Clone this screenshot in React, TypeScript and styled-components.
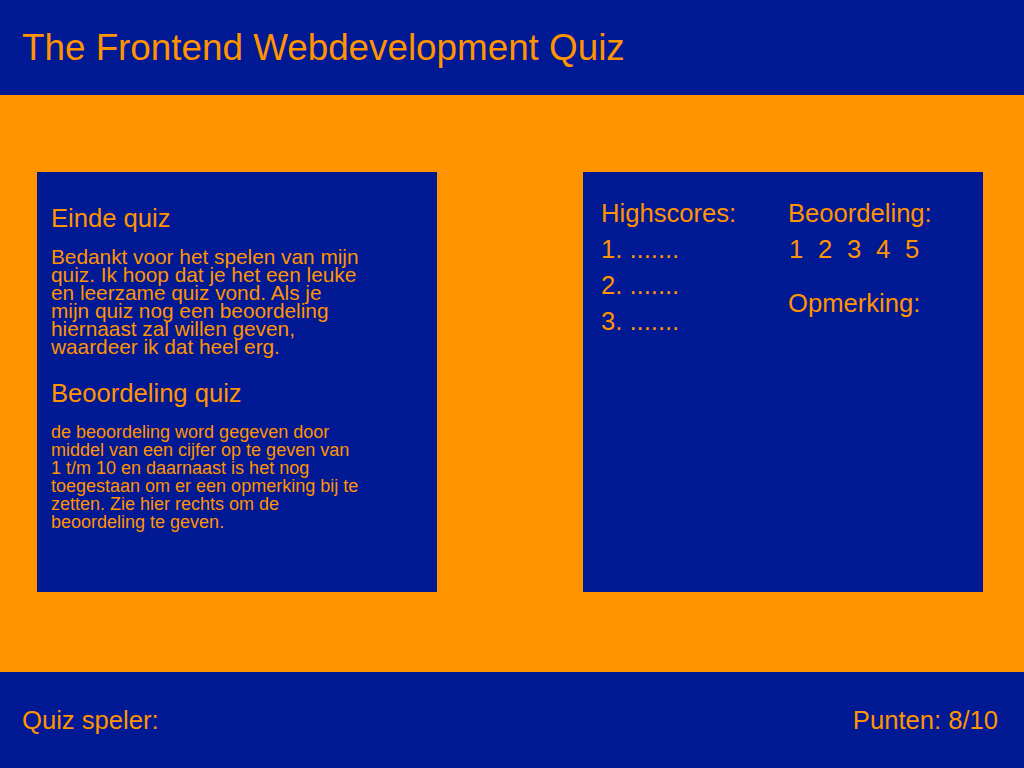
import React from 'react';
import styled, { createGlobalStyle } from 'styled-components';

const BLUE = '#011993';
const ORANGE = '#ff9300';

const GlobalStyle = createGlobalStyle`
  html, body {
    margin: 0;
    padding: 0;
  }
  body {
    font-family: 'Liberation Sans', Arial, sans-serif;
    background: ${ORANGE};
    color: ${ORANGE};
  }
`;

const Page = styled.div`
  display: flex;
  flex-direction: column;
  height: 768px;
`;

const Header = styled.header`
  height: 95px;
  background: ${BLUE};
  display: flex;
  align-items: center;
  padding: 0 22px;
`;

const Title = styled.h1`
  margin: 0;
  font-size: 36.8px;
  font-weight: normal;
  line-height: 42px;
`;

const Main = styled.main`
  height: 577px;
  box-sizing: border-box;
  display: flex;
  align-items: flex-start;
  justify-content: space-between;
  padding: 77px 41px 0 37px;
`;

const Card = styled.section<{ $top: number; $left: number }>`
  width: 400px;
  height: 420px;
  box-sizing: border-box;
  background: ${BLUE};
  padding: ${p => p.$top}px 14px 0 ${p => p.$left}px;
`;

const Heading = styled.h2`
  margin: 0 0 15px;
  font-size: 25.6px;
  font-weight: normal;
  line-height: 30px;
`;

const Text = styled.p<{ $size: number }>`
  margin: 0 0 22px;
  width: 310px;
  font-size: ${p => p.$size}px;
  line-height: 18px;
`;

const Columns = styled.div`
  display: grid;
  grid-template-columns: 187px 1fr;
  font-size: 25.6px;
  line-height: 36px;
`;

const Column = styled.div`
  display: flex;
  flex-direction: column;
`;

const Line = styled.div<{ $gap?: number }>`
  margin-top: ${p => p.$gap ?? 0}px;
`;

const Grades = styled.div`
  display: flex;
  padding-left: 1px;
`;

const Grade = styled.span`
  width: 29px;
`;

const Footer = styled.footer`
  height: 96px;
  background: ${BLUE};
  display: flex;
  align-items: center;
  justify-content: space-between;
  padding: 0 26px 0 22px;
  font-size: 25.6px;
`;

export default function App() {
  return (
    <Page>
      <GlobalStyle />
      <Header>
        <Title>The Frontend Webdevelopment Quiz</Title>
      </Header>
      <Main>
        <Card $top={31} $left={14}>
          <Heading>Einde quiz</Heading>
          <Text $size={20.8}>
            Bedankt voor het spelen van mijn quiz. Ik hoop dat je het een leuke en
            leerzame quiz vond. Als je mijn quiz nog een beoordeling hiernaast zal
            willen geven, waardeer ik dat heel erg.
          </Text>
          <Heading>Beoordeling quiz</Heading>
          <Text $size={18}>
            de beoordeling word gegeven door middel van een cijfer op te geven van 1
            t/m 10 en daarnaast is het nog toegestaan om er een opmerking bij te
            zetten. Zie hier rechts om de beoordeling te geven.
          </Text>
        </Card>
        <Card $top={23} $left={18}>
          <Columns>
            <Column>
              <Line>Highscores:</Line>
              <Line>1. .......</Line>
              <Line>2. .......</Line>
              <Line>3. .......</Line>
            </Column>
            <Column>
              <Line>Beoordeling:</Line>
              <Grades>
                {[1, 2, 3, 4, 5].map(n => (
                  <Grade key={n}>{n}</Grade>
                ))}
              </Grades>
              <Line $gap={18}>Opmerking:</Line>
            </Column>
          </Columns>
        </Card>
      </Main>
      <Footer>
        <span>Quiz speler:</span>
        <span>Punten: 8/10</span>
      </Footer>
    </Page>
  );
}
